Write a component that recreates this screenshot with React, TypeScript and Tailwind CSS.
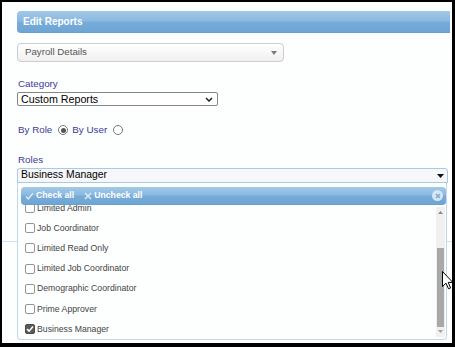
import React from "react";

const items = [
  { label: "Limited Admin", checked: false },
  { label: "Job Coordinator", checked: false },
  { label: "Limited Read Only", checked: false },
  { label: "Limited Job Coordinator", checked: false },
  { label: "Demographic Coordinator", checked: false },
  { label: "Prime Approver", checked: false },
  { label: "Business Manager", checked: true },
];

function Checkbox({ checked }: { checked: boolean }) {
  if (checked) {
    return (
      <div className="w-[10px] h-[10px] rounded-[2px] bg-[#5a5a5a] border border-[#4a4a4a] flex items-center justify-center shrink-0">
        <svg width="8" height="8" viewBox="0 0 8 8">
          <path d="M1 4.2 L3.1 6.2 L7 1.6" fill="none" stroke="#fff" strokeWidth="1.6" />
        </svg>
      </div>
    );
  }
  return <div className="w-[10px] h-[10px] rounded-[2px] bg-white border border-[#949494] shrink-0" />;
}

export default function App() {
  return (
    <div
      className="w-[455px] h-[347px] bg-black pt-[2px] pl-[2px] pr-[3px] pb-[4px]"
      style={{ fontFamily: '"Liberation Sans", Arial, sans-serif' }}
    >
      <div className="relative w-[450px] h-[341px] bg-[#fdfefe] overflow-hidden">
        {/* underlying section */}
        <div className="h-[240px] border-b border-[#cfe0ee] pt-[9px] pl-[15px] pr-[2px] flex flex-col">
          <div className="h-[22px] rounded-l-[4px] border-b border-[#6a9fcc] bg-[linear-gradient(to_bottom,#a3c9e8,#8bb9e0_45%,#77acd8_55%,#6ea5d4)] flex items-center pl-[6px]">
            <span className="text-white font-bold text-[10px] leading-none">Edit Reports</span>
          </div>
          <div className="mt-[10px] w-[267px] h-[19px] rounded-[4px] border border-[#cdcdcd] bg-[linear-gradient(to_bottom,#ffffff,#f0f0f0)] flex items-center justify-between pl-[7px] pr-[6px]">
            <span className="text-[9.7px] text-[#555]">Payroll Details</span>
            <svg width="6" height="4" viewBox="0 0 6 4">
              <path d="M0 0 L6 0 L3 4 Z" fill="#7a7a7a" />
            </svg>
          </div>
          <div className="mt-[16px] h-[12px] leading-[12px] text-[9.8px] text-[#3b3b98] pl-[1px]">Category</div>
          <div className="mt-[2px] w-[201px] h-[14px] border border-[#858585] rounded-[2px] bg-white flex items-center justify-between pl-[3px] pr-[4px]">
            <span className="text-[10.7px] text-black leading-none">Custom Reports</span>
            <svg width="8" height="5" viewBox="0 0 8 5">
              <path d="M1 1 L4 4 L7 1" fill="none" stroke="#222" strokeWidth="1.5" />
            </svg>
          </div>
          <div className="mt-[17px] h-[14px] flex items-center text-[9.8px] text-[#3b3b98] pl-[1px]">
            <span>By Role</span>
            <div className="ml-[6px] w-[10px] h-[10px] rounded-full border border-[#7a7a7a] bg-white flex items-center justify-center">
              <div className="w-[5px] h-[5px] rounded-full bg-[#555]" />
            </div>
            <span className="ml-[4px]">By User</span>
            <div className="ml-[6px] w-[10px] h-[10px] rounded-full border border-[#7a7a7a] bg-white" />
          </div>
          <div className="mt-[17px] h-[12px] leading-[12px] text-[9.8px] text-[#3b3b98] pl-[1px]">Roles</div>
          <div className="mt-[2px] w-[431px] h-[15px] border border-[#a9c9e6] rounded-t-[3px] bg-[#f5f7fa] flex items-center justify-between pl-[3px] pr-[3px]">
            <span className="text-[10.4px] text-black leading-none">Business Manager</span>
            <svg width="7" height="4" viewBox="0 0 7 4">
              <path d="M0 0 L7 0 L3.5 4 Z" fill="#111" />
            </svg>
          </div>
        </div>

        {/* dropdown overlay */}
        <div className="absolute left-[15px] top-[181px] w-[430px] h-[157px] border border-t-0 border-[#c3d8ea] rounded-b-[4px] bg-[#fdfefe] flex flex-col">
          <div className="relative z-10 mt-[4px] ml-[3px] h-[18px] rounded-[4px] border-b border-[#6a9fcc] bg-[linear-gradient(to_bottom,#a3c9e8,#8bb9e0_45%,#77acd8_55%,#6ea5d4)] flex items-center pl-[4px] pr-[3px] text-white font-bold text-[8.7px]">
            <svg width="9" height="8" viewBox="0 0 9 8" className="mr-[2px]">
              <path d="M1 4.5 L3.3 6.8 L8 1.2" fill="none" stroke="#dbe9f6" strokeWidth="1.5" />
            </svg>
            <span>Check all</span>
            <svg width="8" height="8" viewBox="0 0 8 8" className="ml-[10px] mr-[2px]">
              <path d="M1 1 L7 7 M7 1 L1 7" stroke="#dbe9f6" strokeWidth="1.6" />
            </svg>
            <span>Uncheck all</span>
            <div className="ml-auto w-[11px] h-[11px] rounded-full bg-[#d6e6f4] flex items-center justify-center">
              <svg width="6" height="6" viewBox="0 0 6 6">
                <path d="M1 1 L5 5 M5 1 L1 5" stroke="#7aaad6" strokeWidth="1.5" />
              </svg>
            </div>
          </div>
          <div className="flex-1 flex min-h-0">
            <div className="flex-1 overflow-hidden">
              <div className="-mt-[7px] pl-[7px]">
                {items.map((it) => (
                  <div key={it.label} className="h-[20.2px] flex items-center gap-[2px]">
                    <Checkbox checked={it.checked} />
                    <span className="text-[8.7px] text-[#444] leading-none">{it.label}</span>
                  </div>
                ))}
              </div>
            </div>
            <div className="w-[9px] mr-[1px] mt-[2px] mb-[2px] bg-[#f0f0f0] flex flex-col items-center">
              <div className="h-[10px] flex items-center justify-center">
                <svg width="5" height="3" viewBox="0 0 5 3">
                  <path d="M0 3 L5 3 L2.5 0 Z" fill="#8a8a8a" />
                </svg>
              </div>
              <div className="mt-[31px] w-[7px] h-[79px] bg-[#a8a8a8]" />
              <div className="h-[9px] flex items-center justify-center">
                <svg width="5" height="3" viewBox="0 0 5 3">
                  <path d="M0 0 L5 0 L2.5 3 Z" fill="#a0a0a0" />
                </svg>
              </div>
            </div>
          </div>
        </div>

        {/* mouse cursor */}
        <svg className="absolute left-[440px] top-[269px]" width="12" height="19" viewBox="0 0 12 19">
          <path d="M0.5 0.5 L0.5 15.5 L4 12.2 L6.5 17.8 L8.6 16.9 L6.2 11.4 L10.8 11.4 Z" fill="#fff" stroke="#000" strokeWidth="1" strokeLinejoin="round" />
        </svg>
      </div>
    </div>
  );
}
